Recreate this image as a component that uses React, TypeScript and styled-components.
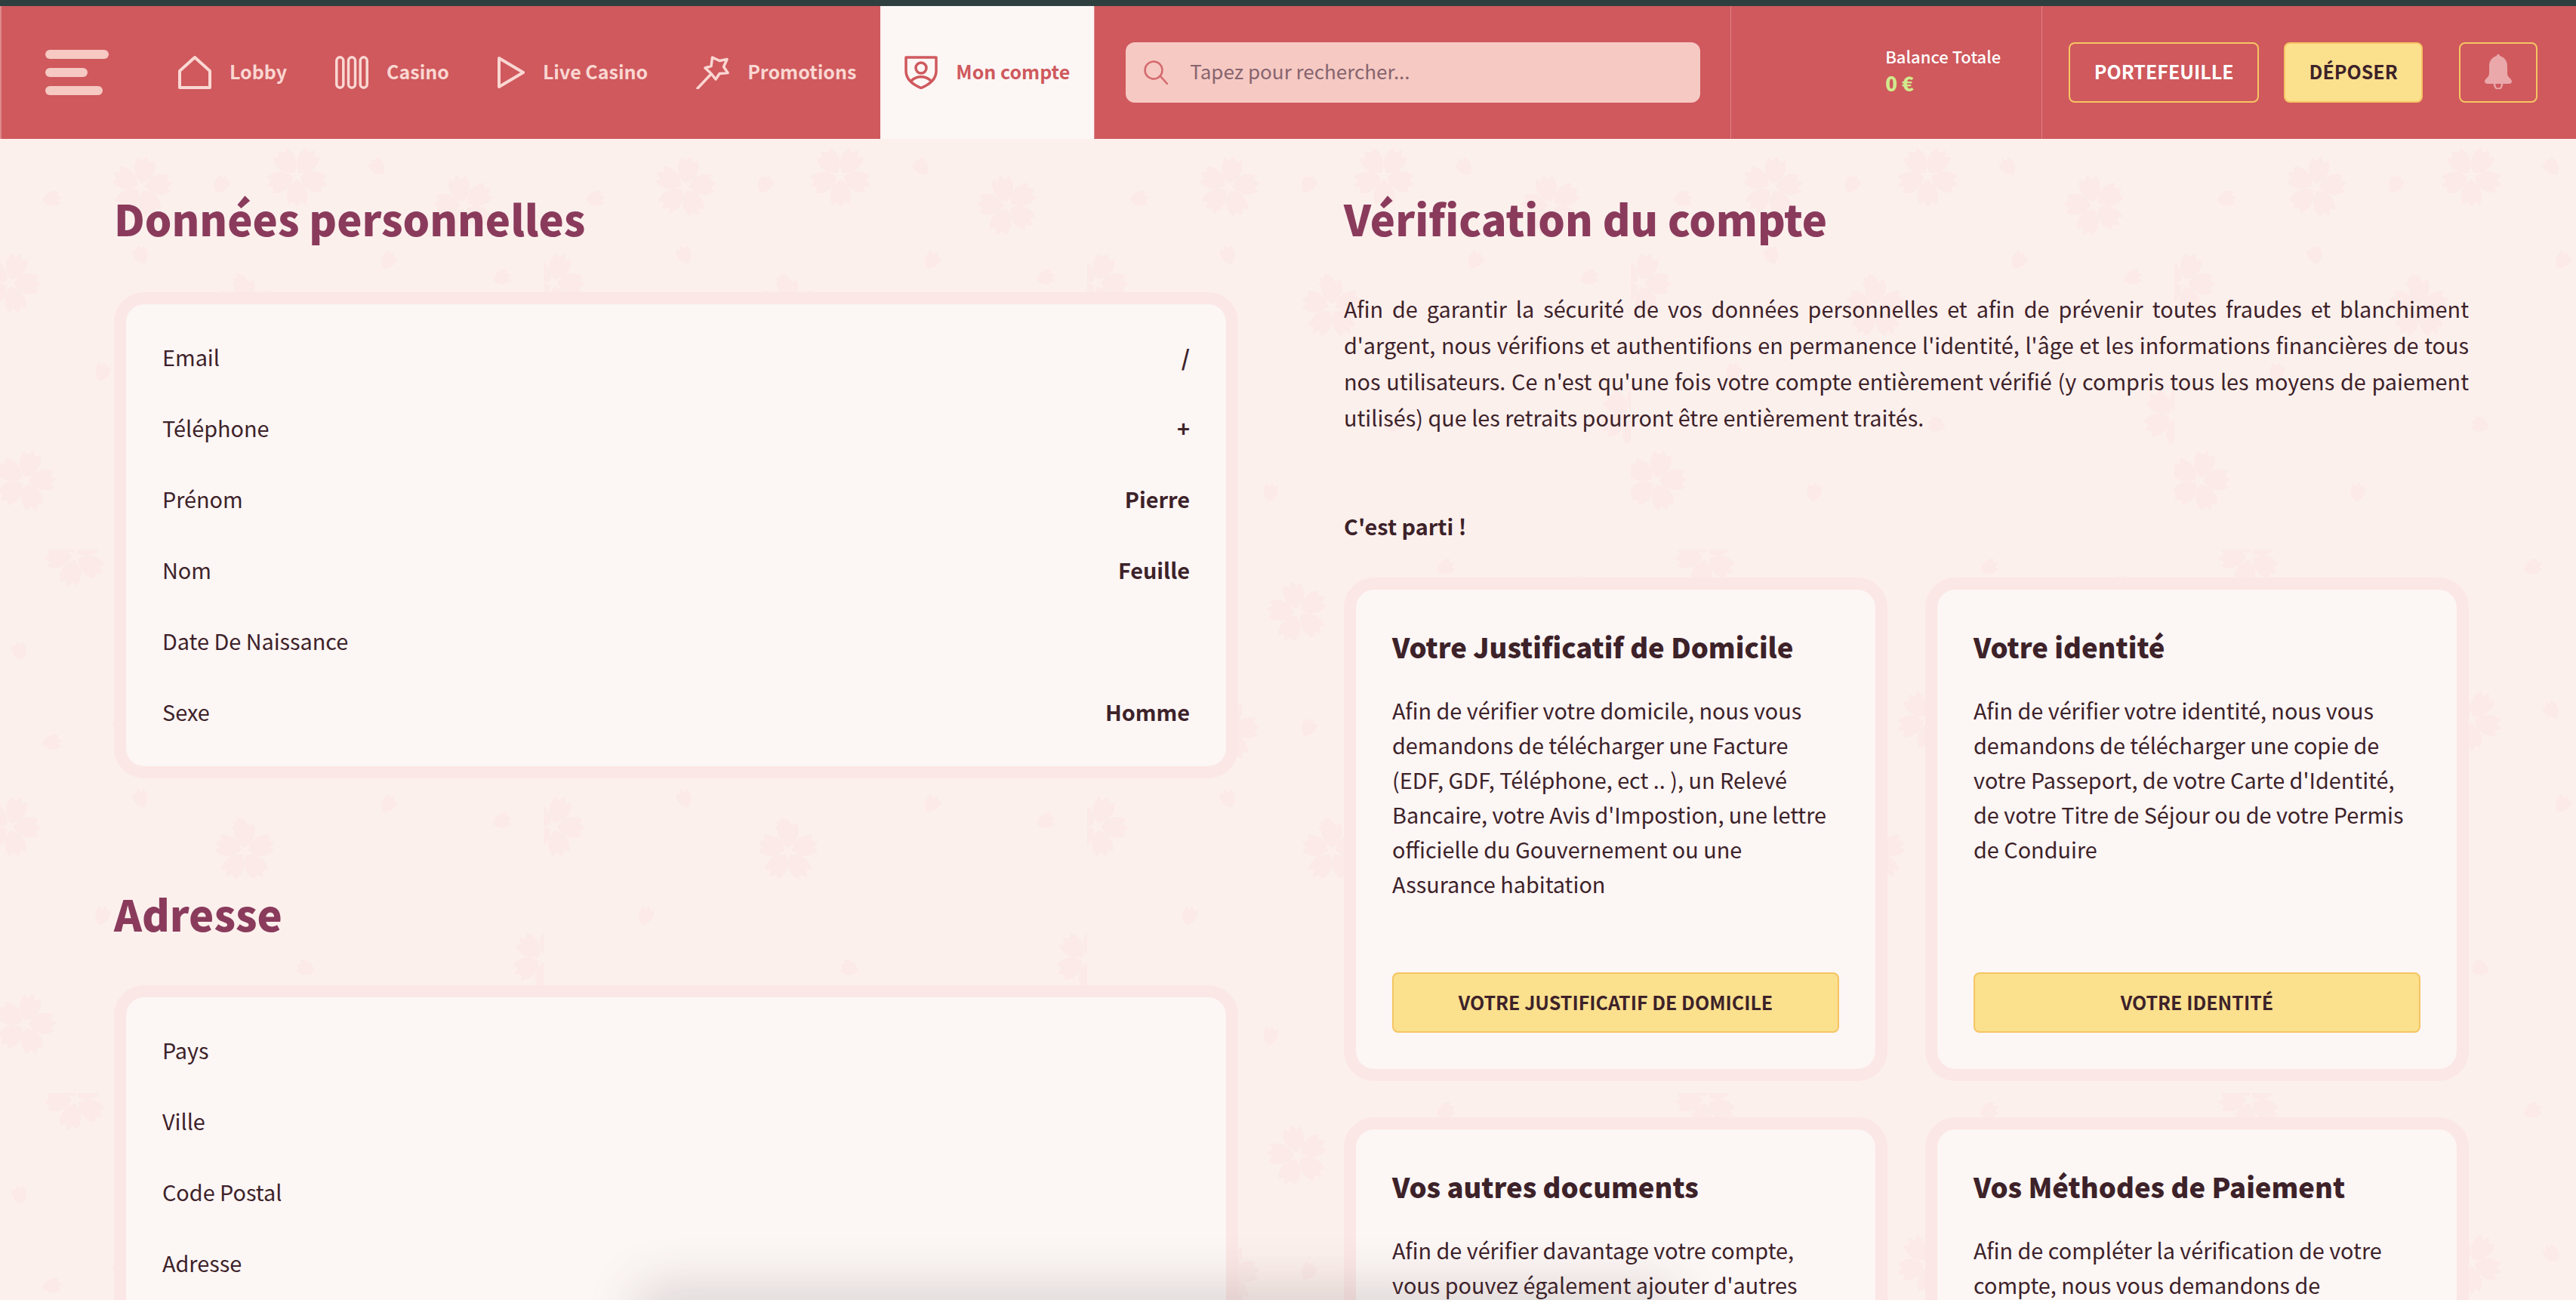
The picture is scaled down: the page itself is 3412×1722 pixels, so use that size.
import React from 'react';
import styled, { createGlobalStyle } from 'styled-components';

const GlobalStyle = createGlobalStyle`
  html, body {
    margin: 0;
    padding: 0;
    height: 100%;
    overflow: hidden;
  }

  body {
    font-family: "Noto Sans CJK SC", "Noto Sans", sans-serif;
    color: #3d2229;
    background: #fcf0ed;
  }
`;

const Shell = styled.div`
  position: relative;
  height: 100vh;
  overflow: hidden;
  background: #fcf0ed;
  border-top: 8px solid #2e3f3f;
  box-sizing: border-box;
`;

const Nav = styled.header`
  position: relative;
  z-index: 1;
  display: flex;
  align-items: stretch;
  height: 176px;
  padding-left: 58px;
  background: #cf595d;
  border-left: 2px solid #dd8a8c;
`;

const Burger = styled.div`
  display: flex;
  flex-direction: column;
  align-self: center;
  gap: 12px;
  width: 84px;
  margin-right: 60px;
`;

const BurgerBar = styled.span<{ $width: number }>`
  display: block;
  width: ${(p) => p.$width}px;
  height: 12px;
  border-radius: 6px;
  background: #f6c9c3;
`;

const NavItem = styled.a<{ $active?: boolean }>`
  display: flex;
  align-items: center;
  gap: 24px;
  padding: 0 32px;
  font-size: 25px;
  font-weight: 700;
  line-height: 40px;
  color: ${(p) => (p.$active ? '#cf595d' : '#fad7d2')};
  background: ${(p) => (p.$active ? '#fcf6f5' : 'transparent')};
  box-shadow: ${(p) => (p.$active ? '1px 0 0 #dd8a8c' : 'none')};
  white-space: nowrap;

  svg {
    flex: none;
    display: block;
  }
`;

const NavLabel = styled.span`
  margin-bottom: 4px;
`;

const Search = styled.div`
  display: flex;
  align-items: center;
  gap: 29px;
  align-self: center;
  box-sizing: border-box;
  width: 761px;
  height: 80px;
  margin-left: 42px;
  padding-left: 24px;
  border-radius: 12px;
  background: #f6c9c3;
  font-size: 26px;
  line-height: 36px;
  color: #86646e;
`;

const SearchHint = styled.span`
  margin-bottom: 4px;
`;

const BalanceBox = styled.div`
  display: flex;
  flex-direction: column;
  justify-content: center;
  gap: 8px;
  box-sizing: border-box;
  width: 413px;
  margin-left: 40px;
  padding: 0 0 8px 204px;
  border-left: 1px solid #dc8285;
  border-right: 1px solid #dc8285;
`;

const BalanceLabel = styled.div`
  font-size: 22px;
  font-weight: 500;
  line-height: 28px;
  color: #fff;
`;

const BalanceValue = styled.div`
  font-size: 26px;
  font-weight: 900;
  line-height: 28px;
  color: #d0ea8d;
`;

const HeaderButton = styled.button<{ $filled?: boolean; $width: number; $gap: number }>`
  align-self: center;
  display: flex;
  align-items: center;
  justify-content: center;
  box-sizing: border-box;
  width: ${(p) => p.$width}px;
  height: 80px;
  margin-left: ${(p) => p.$gap}px;
  padding: 0 0 4px;
  border: 2px solid #f5c563;
  border-radius: 8px;
  background: ${(p) => (p.$filled ? '#fbe08e' : 'transparent')};
  color: ${(p) => (p.$filled ? '#3d2229' : '#fff')};
  font-family: inherit;
  font-size: 25px;
  font-weight: 700;
  line-height: 30px;
`;

const Columns = styled.main`
  position: relative;
  z-index: 1;
  display: grid;
  grid-template-columns: 1489px 1490px;
  gap: 140px;
  padding: 65px 0 0 151px;
`;

const Heading = styled.h2<{ $spaced?: boolean }>`
  margin: ${(p) => (p.$spaced ? '139px' : '0')} 0 ${(p) => (p.$spaced ? '55px' : '58px')};
  font-size: 56px;
  font-weight: 900;
  line-height: 80px;
  color: #8a3b5c;
`;

const Panel = styled.section`
  box-sizing: border-box;
  border: 16px solid #fbe7e5;
  border-radius: 40px;
  background: #fcf6f5;
`;

const InfoPanel = styled(Panel)`
  padding: 23px 48px 25px;
`;

const Row = styled.div`
  display: flex;
  align-items: center;
  justify-content: space-between;
  height: 94px;
  font-size: 28.8px;
  line-height: 44px;
`;

const RowValue = styled.span`
  font-weight: 700;
`;

const Intro = styled.p`
  margin: -2px 0 96px;
  font-size: 28.8px;
  line-height: 48px;
  text-align: justify;
`;

const Lead = styled.p`
  margin: 0 0 44px;
  font-size: 28.8px;
  font-weight: 700;
  line-height: 48px;
`;

const DocGrid = styled.div`
  display: grid;
  grid-template-columns: 720px 720px;
  gap: 48px 50px;
`;

const DocCard = styled(Panel)`
  display: flex;
  flex-direction: column;
  height: 667px;
  padding: 46px 48px 48px;
`;

const DocTitle = styled.h3`
  margin: 0 0 33px;
  font-size: 36.4px;
  font-weight: 900;
  line-height: 58px;
`;

const DocText = styled.p`
  margin: 0;
  font-size: 28.8px;
  line-height: 46px;
`;

const DocButton = styled.button`
  flex: none;
  height: 80px;
  margin-top: auto;
  padding: 0 0 2px;
  border: 2px solid #f5c563;
  border-radius: 8px;
  background: #fbe08e;
  color: #3d2229;
  font-family: inherit;
  font-size: 25px;
  font-weight: 700;
  line-height: 36px;
`;

const Petals = styled.svg`
  position: absolute;
  inset: 0;
  width: 100%;
  height: 100%;
`;

const BottomShade = styled.div`
  position: absolute;
  z-index: 2;
  left: 860px;
  bottom: -40px;
  width: 1340px;
  height: 40px;
  box-shadow: 0 0 70px 14px rgba(70, 60, 60, 0.2);
`;

const PETAL = 'M0 -5 C-13 -12 -17 -26 -11 -38 L-5 -34 L0 -42 L5 -34 L11 -38 C17 -26 13 -12 0 -5 Z';

const flowers = [
  [187, 240, 10],
  [393, 225, 35],
  [615, 264, -15],
  [13, 367, 20],
  [100, 9, 50],
  [324, 400, 0],
  [718, 542, 25],
  [279, 83, 60],
  [33, 629, 15],
];

const loosePetals = [
  [285, 250, 30],
  [192, 345, -20],
  [505, 350, 35],
  [650, 365, 70],
  [333, 375, -60],
  [53, 258, 80],
  [510, 225, -40],
  [130, 500, 20],
  [420, 560, -70],
  [600, 120, 45],
  [240, 660, 10],
  [660, 60, -30],
  [460, 30, 65],
  [30, 150, -15],
];

const Background = () => (
  <Petals aria-hidden='true'>
    <defs>
      <pattern id='sakura' width='720' height='720' patternUnits='userSpaceOnUse'>
        <g fill='#fbeae7'>
          {flowers.map(([x, y, r]) => (
            <g key={`${x}-${y}`} transform={`translate(${x} ${y}) rotate(${r})`}>
              {[0, 72, 144, 216, 288].map((a) => (
                <path key={a} d={PETAL} transform={`rotate(${a})`} />
              ))}
            </g>
          ))}
          {loosePetals.map(([x, y, r]) => (
            <path key={`${x}-${y}`} d={PETAL} transform={`translate(${x} ${y}) rotate(${r}) scale(.7)`} />
          ))}
        </g>
      </pattern>
    </defs>
    <rect width='100%' height='100%' fill='url(#sakura)' />
  </Petals>
);

const iconProps = {
  fill: 'none',
  stroke: 'currentColor',
  strokeLinejoin: 'round' as const,
  strokeLinecap: 'round' as const,
};

const HomeIcon = () => (
  <svg width='44' height='44' viewBox='0 0 44 44' strokeWidth='4' {...iconProps}>
    <path d='M22 2 L42 20 V42 H2 V20 Z' />
  </svg>
);

const SlotsIcon = () => (
  <svg width='44' height='44' viewBox='0 0 44 44' strokeWidth='3.5' {...iconProps}>
    <rect x='1.8' y='1.8' width='9' height='40.4' rx='4.5' />
    <rect x='17.5' y='1.8' width='9' height='40.4' rx='4.5' />
    <rect x='33.2' y='1.8' width='9' height='40.4' rx='4.5' />
  </svg>
);

const PlayIcon = () => (
  <svg width='36' height='44' viewBox='0 0 36 44' strokeWidth='4' {...iconProps}>
    <path d='M2 3 L34 22 L2 41 Z' />
  </svg>
);

const WandIcon = () => (
  <svg width='44' height='44' viewBox='0 0 44 44' strokeWidth='3.5' {...iconProps}>
    <path d='M21.5 2 L31 6.5 L41 4.5 L36.5 14.5 L42 22.5 L31 23.5 L26 31 L20 23.5 L12 16 L20 13.5 Z' />
    <path d='M19 25 L2 43' />
  </svg>
);

const ShieldIcon = () => (
  <svg width='44' height='44' viewBox='0 0 44 44' strokeWidth='3.5' {...iconProps}>
    <path d='M2 2 H42 V20 C42 31 33 38 22 42.5 C11 38 2 31 2 20 Z' />
    <circle cx='22' cy='16' r='7' />
    <path d='M9 33 C16 26 28 26 35 33' />
  </svg>
);

const SearchIcon = () => (
  <svg width='32' height='32' viewBox='0 0 32 32' stroke='#d5696d' strokeWidth='2.5' fill='none' strokeLinecap='round'>
    <circle cx='13' cy='13' r='11.5' />
    <path d='M22 21 L31 31' />
  </svg>
);

const BellIcon = () => (
  <svg width='36' height='48' viewBox='0 0 36 48'>
    <path
      fill='#eaa8ab'
      d='M16 4 C16 1 20 1 20 4 C27 6 30 11 30 18 V27 C30 33 36 34 36 38 C36 40 34 41 32 41 H4 C2 41 0 40 0 38 C0 34 6 33 6 27 V18 C6 11 9 6 16 4 Z'
    />
    <path fill='none' stroke='#eaa8ab' strokeWidth='2.5' d='M13 41 C13 50 23 50 23 41' />
  </svg>
);

const navItems = [
  { label: 'Lobby', icon: <HomeIcon /> },
  { label: 'Casino', icon: <SlotsIcon /> },
  { label: 'Live Casino', icon: <PlayIcon /> },
  { label: 'Promotions', icon: <WandIcon /> },
  { label: 'Mon compte', icon: <ShieldIcon />, active: true },
];

const personal = [
  ['Email', '/'],
  ['Téléphone', '+'],
  ['Prénom', 'Pierre'],
  ['Nom', 'Feuille'],
  ['Date De Naissance', ''],
  ['Sexe', 'Homme'],
];

const address = ['Pays', 'Ville', 'Code Postal', 'Adresse'];

const documents = [
  {
    title: 'Votre Justificatif de Domicile',
    text: "Afin de vérifier votre domicile, nous vous demandons de télécharger une Facture (EDF, GDF, Téléphone, ect .. ), un Relevé Bancaire, votre Avis d'Impostion, une lettre officielle du Gouvernement ou une Assurance habitation",
    action: 'VOTRE JUSTIFICATIF DE DOMICILE',
  },
  {
    title: 'Votre identité',
    text: "Afin de vérifier votre identité, nous vous demandons de télécharger une copie de votre Passeport, de votre Carte d'Identité, de votre Titre de Séjour ou de votre Permis de Conduire",
    action: 'VOTRE IDENTITÉ',
  },
  {
    title: 'Vos autres documents',
    text: "Afin de vérifier davantage votre compte, vous pouvez également ajouter d'autres",
  },
  {
    title: 'Vos Méthodes de Paiement',
    text: 'Afin de compléter la vérification de votre compte, nous vous demandons de',
  },
];

const App = () => (
  <Shell>
    <GlobalStyle />
    <Background />
    <Nav>
      <Burger>
        <BurgerBar $width={84} />
        <BurgerBar $width={56} />
        <BurgerBar $width={76} />
      </Burger>
      {navItems.map((item) => (
        <NavItem key={item.label} $active={item.active}>
          {item.icon}
          <NavLabel>{item.label}</NavLabel>
        </NavItem>
      ))}
      <Search>
        <SearchIcon />
        <SearchHint>Tapez pour rechercher...</SearchHint>
      </Search>
      <BalanceBox>
        <BalanceLabel>Balance Totale</BalanceLabel>
        <BalanceValue>0 €</BalanceValue>
      </BalanceBox>
      <HeaderButton $width={252} $gap={35}>
        PORTEFEUILLE
      </HeaderButton>
      <HeaderButton $filled $width={184} $gap={33}>
        DÉPOSER
      </HeaderButton>
      <HeaderButton $width={104} $gap={48}>
        <BellIcon />
      </HeaderButton>
    </Nav>
    <Columns>
      <div>
        <Heading>Données personnelles</Heading>
        <InfoPanel>
          {personal.map(([label, value]) => (
            <Row key={label}>
              {label}
              <RowValue>{value}</RowValue>
            </Row>
          ))}
        </InfoPanel>
        <Heading $spaced>Adresse</Heading>
        <InfoPanel>
          {address.map((label) => (
            <Row key={label}>{label}</Row>
          ))}
        </InfoPanel>
      </div>
      <div>
        <Heading>Vérification du compte</Heading>
        <Intro>
          Afin de garantir la sécurité de vos données personnelles et afin de prévenir toutes fraudes et blanchiment
          d'argent, nous vérifions et authentifions en permanence l'identité, l'âge et les informations financières de
          tous nos utilisateurs. Ce n'est qu'une fois votre compte entièrement vérifié (y compris tous les moyens de
          paiement utilisés) que les retraits pourront être entièrement traités.
        </Intro>
        <Lead>C'est parti !</Lead>
        <DocGrid>
          {documents.map((doc) => (
            <DocCard key={doc.title}>
              <DocTitle>{doc.title}</DocTitle>
              <DocText>{doc.text}</DocText>
              {doc.action && <DocButton>{doc.action}</DocButton>}
            </DocCard>
          ))}
        </DocGrid>
      </div>
    </Columns>
    <BottomShade />
  </Shell>
);

export default App;
